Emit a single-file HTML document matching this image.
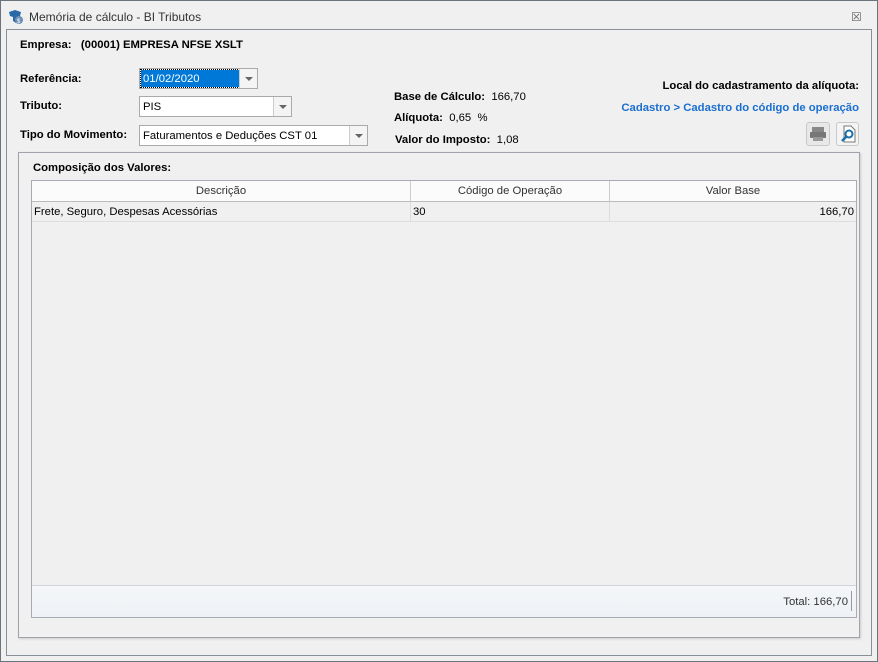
<!DOCTYPE html>
<html><head><meta charset="utf-8"><style>
*{margin:0;padding:0;box-sizing:border-box}
body{width:878px;height:662px;background:#f0f0f0;font-family:"Liberation Sans",sans-serif;font-size:11.3px;color:#000;position:relative;overflow:hidden}
.a{position:absolute;white-space:nowrap}
.b{font-weight:bold}
.combo{position:absolute;background:#fff;border:1px solid #aaa;height:21px}
.combo .arr{position:absolute;right:0;top:0;width:18px;height:19px;border-left:1px solid #ccc;background:#f4f4f4}
.combo .arr:after{content:"";position:absolute;left:5px;top:8px;border-left:4px solid transparent;border-right:4px solid transparent;border-top:4px solid #666}
.combo span{position:absolute;left:3px;top:4px}
.th{position:absolute;top:0;height:21px;border-right:1px solid #ccc;text-align:center;line-height:21px;color:#333;border-bottom:1px solid #bbb}
.td{position:absolute;top:21px;height:20px;border-right:1px solid #ddd;border-bottom:1px solid #ddd;line-height:20px;padding:0 2px}
</style></head><body>
<div class="a" style="left:0;top:0;width:878px;height:662px;border:1px solid #6b737c"></div>
<svg class="a" style="left:7px;top:9px" width="18" height="16" viewBox="0 0 18 16"><path d="M2 3 L8 1 L14 3 L13 7 L10 9 L9 14 L6 12 L6 8 L3 7Z" fill="#2a6aa8"/><circle cx="12" cy="11" r="4" fill="#6b8fb5"/><text x="10" y="14" font-size="6" fill="#fff">$</text></svg>
<div class="a" style="left:29px;top:10px;color:#333;font-size:12px">Memória de cálculo - BI Tributos</div>
<div class="a" style="left:851px;top:10px;color:#666;font-size:12px">☒</div>
<div class="a" style="left:6px;top:29px;width:866px;height:627px;border:1px solid #8a9098"></div>
<div class="a b" style="left:20px;top:39px">Empresa:&nbsp;&nbsp; (00001) EMPRESA NFSE XSLT</div>
<div class="a b" style="left:20px;top:73px">Referência:</div>
<div class="a b" style="left:20px;top:100px">Tributo:</div>
<div class="a b" style="left:20px;top:129px">Tipo do Movimento:</div>
<div class="combo" style="left:139px;top:68px;width:119px"><div style="position:absolute;left:1px;top:1px;width:98px;height:17px;background:#0078d7;outline:1px dotted #000"></div><span style="color:#fff">01/02/2020</span><div class="arr"></div></div>
<div class="combo" style="left:139px;top:96px;width:153px"><span>PIS</span><div class="arr"></div></div>
<div class="combo" style="left:139px;top:125px;width:229px"><span>Faturamentos e Deduções CST 01</span><div class="arr"></div></div>
<div class="a" style="left:394px;top:91px"><b>Base de Cálculo:</b>&nbsp; 166,70</div>
<div class="a" style="left:394px;top:112px"><b>Alíquota:</b>&nbsp; 0,65&nbsp; %</div>
<div class="a" style="left:395px;top:134px"><b>Valor do Imposto:</b>&nbsp; 1,08</div>
<div class="a b" style="right:19px;top:80px">Local do cadastramento da alíquota:</div>
<div class="a b" style="right:19px;top:102px;color:#1a6fd0">Cadastro &gt; Cadastro do código de operação</div>
<div class="a" style="left:806px;top:122px;width:24px;height:24px;border:1px solid #c8c8c8;border-radius:3px;background:#e8e8e8"><svg width="22" height="22"><rect x="5" y="4" width="12" height="5" fill="#888"/><rect x="3" y="9" width="16" height="6" rx="1" fill="#777"/><rect x="6" y="14" width="10" height="4" fill="#999"/></svg></div>
<div class="a" style="left:836px;top:122px;width:23px;height:24px;border:1px solid #c8c8c8;border-radius:3px;background:#f4f4f4"><svg width="22" height="22"><path d="M7 3h7l4 4v12H7z" fill="#fff" stroke="#777"/><circle cx="12" cy="11" r="3.5" fill="none" stroke="#1a6fa8" stroke-width="2"/><path d="M9.5 13.5L5 18" stroke="#1a6fa8" stroke-width="2.5"/></svg></div>
<div class="a" style="left:18px;top:152px;width:842px;height:486px;border:1px solid #a0a4aa;box-shadow:1px 1px 2px #ccc"></div>
<div class="a b" style="left:33px;top:162px">Composição dos Valores:</div>
<div class="a" style="left:31px;top:180px;width:826px;height:438px;border:1px solid #a8acb2;background:#f0f0f0">
<div class="th" style="left:0;width:379px;background:#fbfbfb">Descrição</div>
<div class="th" style="left:379px;width:199px;background:#fbfbfb">Código de Operação</div>
<div class="th" style="left:578px;width:246px;background:#fbfbfb;border-right:none">Valor Base</div>
<div class="td" style="left:0;width:379px">Frete, Seguro, Despesas Acessórias</div>
<div class="td" style="left:379px;width:199px">30</div>
<div class="td" style="left:578px;width:246px;text-align:right;border-right:none">166,70</div>
<div class="a" style="left:0;top:404px;width:824px;height:32px;border-top:1px solid #d0d4da;background:linear-gradient(#f4f6f9,#eef1f5)"><div class="a" style="right:8px;top:10px;color:#333">Total: 166,70</div><div class="a" style="right:4px;top:5px;width:1px;height:20px;background:#999"></div></div>
</div>
</body></html>
